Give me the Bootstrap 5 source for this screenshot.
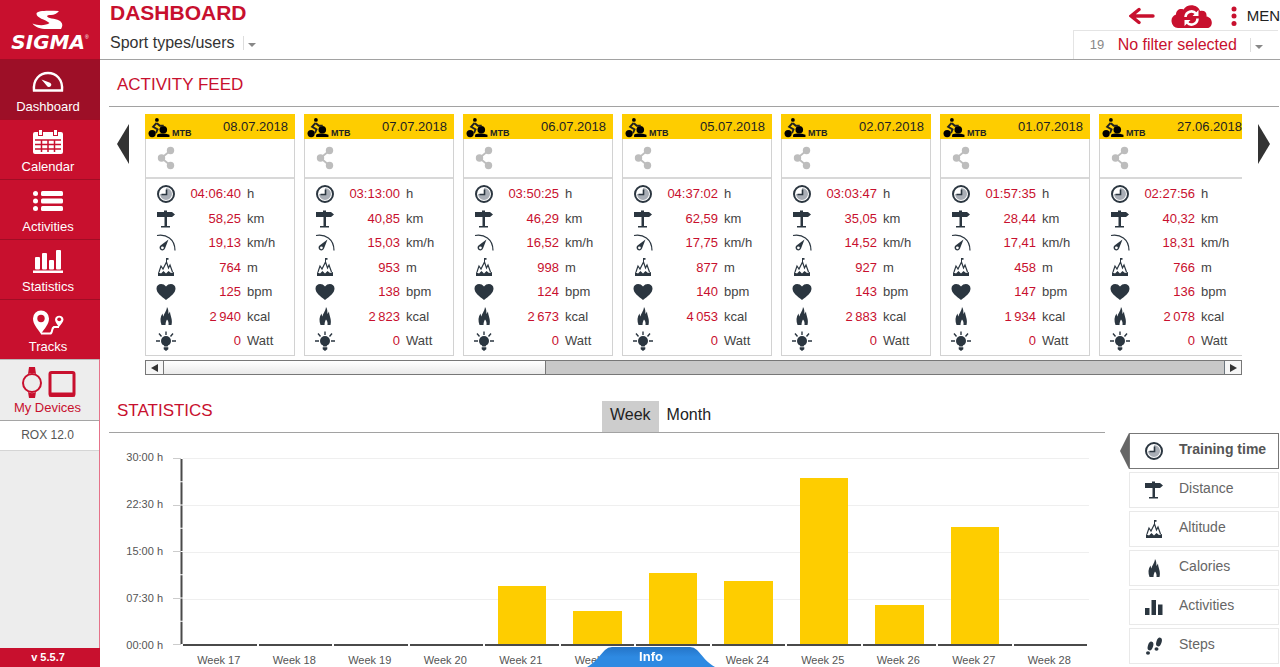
<!DOCTYPE html>
<html lang="en">
<head>
<meta charset="utf-8">
<meta name="viewport" content="width=device-width, initial-scale=1">
<title>Dashboard</title>
<link rel="stylesheet" href="https://cdn.jsdelivr.net/npm/bootstrap@5.3.0/dist/css/bootstrap.min.css">
<style>
:root{--sg-red:#c8102e;--sg-yellow:#fecd00;--sg-ink:#2b3640;--sg-line:#a2a2a2}
body{font-family:"Liberation Sans",Arial,sans-serif;color:#333;background:#fff;overflow-x:hidden}
button,select{font-family:inherit}
.side{width:100px;flex:none;background:#ededed}
.side-red{background:var(--sg-red);color:#fff}
.logo-box{height:59px;padding:10px 4px 0 0}
.wordmark{font:italic bold 20px/16px "DejaVu Sans",sans-serif}
.reg{font-size:5px;line-height:6px}
.nav-tile{height:60px;padding:10px 4px 0 0;border-top:1px solid #a00d25;color:#fff;font-size:13px;line-height:16px;gap:3px}
.nav-tile svg{width:32px;height:26px}
.nav-tile.on{background:#9d0f27}
.nav-tile:hover{color:#fff}
.side-low{border-right:1px solid #e5738a}
.devices{height:62px;padding:7px 4px 0 0;border-top:1px solid #b9b9b9;border-bottom:1px solid #a5a5a5;color:var(--sg-red);font-size:13px;line-height:16px;gap:1px}
.device-name{height:30px;padding:0 4px 2px 0;background:#fff;border-bottom:1px solid #d5d5d5;font-size:12px;color:#555}
.version{height:19px;padding-right:4px;font-size:11px;font-weight:bold}
.top{height:60px;border-bottom:1px solid var(--sg-line);padding-left:10px}
.top h1{font-size:21px;line-height:24px;font-weight:bold;color:var(--sg-red);margin:1px 0 8px}
.plain-select{appearance:none;border:0;background:none;padding:0;font-size:16px;line-height:20px;color:#333}
.split{width:1px;height:14px;background:#ddd}
.tri{border:4px solid transparent;border-top-color:#888;border-bottom:0}
.tools{height:30px;padding-left:56px;padding-top:2px}
.icon-btn{border:0;background:none;padding:0;display:flex}
.menu-word{font-size:15px;line-height:20px;color:#222}
.filter-box{height:29px;width:205px;border:1px solid #e4e4e4;border-width:1px 0 0 1px;padding-left:16px;overflow:hidden;color:var(--sg-red)}
.filter-box>*{flex:none}
.filter-box label{font-size:13px;color:#888;width:28px}
.filter-box select{color:var(--sg-red);width:124px}
.content{padding:0 1px 0 9px}
.sec-title{font-size:17px;line-height:20px;font-weight:normal;color:var(--sg-red);margin:0}
.feed-head{height:47px;padding:15px 0 0 8px;border-bottom:1px solid var(--sg-line)}
.feed{padding:7px 9px 0 8px;gap:16px}
.turn{margin-top:10px}
.act{width:150px;flex:none;border:1px solid #d2d2d2;height:242px;border-top:0}
.act-top{height:25px;background:var(--sg-yellow);margin:0 -1px;padding:0 7px 0 3px;font-size:13px;line-height:26px;color:#222}
.act-top b{font-size:9px;line-height:10px;margin:14px 0 0 2px}
.act-share{height:40px;border-bottom:2px solid #d8d8d8;padding:7px 0 0 10px}
.act-rows{height:176px;padding:3px 0 2px 10px}
.act-row{flex:1 1 0;color:#444;font-size:13px}
.act-row output{width:65px;color:var(--sg-red);text-align:right;margin-right:6px}
.act-list{gap:9px}
.hbar{height:15px;margin-top:4px;border:1px solid #777;background:#c8c8c8}
.hbar button{width:17px;border:0;background:#f6f6f6;padding:0}
.hbar-thumb{width:35%;background:linear-gradient(#fff,#eaeaea);border:solid #777;border-width:0 1px}
.stats{margin-top:26px;gap:24px}
.stats-head{display:grid;grid-template-columns:98fr 100fr;border-bottom:1px solid var(--sg-line)}
.stats-head .sec-title{padding-left:8px}
.tab-btn{border:0;background:none;font-size:16px;line-height:20px;padding:4px 8px 7px;color:#222}
.tab-btn.on{background:#cdcdcd}
.chart{padding:25px 16px 0 17px;font-size:11px;line-height:12px;color:#555}
.y-labels{width:37px;margin:-7px 10px -5px 0}
.plot{display:grid;height:188px}
.plot>div{grid-area:1/1}
.rule{flex:1 1 0;border-top:1px solid #efefef}
.slot{flex:1 1 0;border-bottom:2px solid #4a4a4a;margin-right:2px}
.bar-fill{width:66%;background:var(--sg-yellow)}
.x-labels{margin-left:57px;padding-top:8px}
.x-labels span{flex:1 1 0;text-align:center;padding-right:4px}
.picker{width:150px;flex:none;padding-top:32px;gap:3px}
.pick{height:36px;border:1px solid #e9e9e9;background:#fff;padding:0 0 0 14px;gap:15px;font-size:14px;color:#666;position:relative}
.pick span{padding-bottom:3px}
.pick.on{border-color:#777;font-weight:bold;color:#555}
.pick-mark{position:absolute;left:-10px;top:-1px}
.info-tab{position:fixed;bottom:0;left:50%;margin-left:-53px;border:0;padding:0;background:none;width:128px;height:20px}
.info-tab svg{position:absolute;inset:0}
.info-tab span{position:relative;color:#fff;font-weight:bold;font-size:13px;line-height:20px;display:block}
.ink{color:var(--sg-ink);fill:currentColor}
</style>
</head>
<body>
<svg class="d-none" aria-hidden="true">
  <symbol id="i-time" viewBox="0 0 20 20"><circle cx="10" cy="10" r="8" fill="#fff" stroke="currentColor" stroke-width="2"/><path d="M10 4a6 6 0 1 1-6 6h6z" fill="#a9aeb6"/><path d="M10.500 5.500v5H5.500" fill="none" stroke="currentColor" stroke-width="1.600"/></symbol>
  <symbol id="i-dist" viewBox="0 0 20 20"><path d="M1 3h7V1.500h3V3h5l3 2.500L16 8h-5v9h3v1.500H5V17h3.500V8H1z"/></symbol>
  <symbol id="i-speed" viewBox="0 0 20 20"><path d="M1 2.500c9-1.500 18 3 18 15" fill="none" stroke="currentColor" stroke-width="1.200"/><path d="M12.500 6.500 9 15.500A2.800 2.800 0 1 1 4.500 12.500z"/><circle cx="6.400" cy="14.800" r="1.400" fill="#fff"/></symbol>
  <symbol id="i-alt" viewBox="0 0 20 20"><path d="M3 15l2-6 2 3L10.500 5l2 6 1.500-3 2.500 7" fill="none" stroke="currentColor" stroke-width="1.200"/><path d="M10 6V1h2.500v1.700H11V6zM2 19v-4l3 1.500L7.500 14l2.500 2.500 2.500-2.500 2.500 2 3-1v4z"/></symbol>
  <symbol id="i-heart" viewBox="0 0 20 20"><path d="M10 18C5 14 .5 11 .5 6.500.5 1.500 7 .5 10 4.500c3-4 9.500-3 9.500 2C19.500 11 15 14 10 18z"/></symbol>
  <symbol id="i-fire" viewBox="0 0 20 20"><path d="M5.500 19C4 15 4 11 6.500 7.500c.3 1 .3 2 1 3C8 7 10.500 5.500 11 1c1.700 2 1.200 5 1.500 7L14 5.500c0 4 3 8 1.500 13.500h-3c.2-2 0-4-1.500-5.500-1 1.500-1.300 3-1.500 5.500z"/></symbol>
  <symbol id="i-watt" viewBox="0 0 20 20"><circle cx="10" cy="10" r="5"/><path d="M8 14h4l-.3 1.500H8.300zM7.700 16.200h4.600v2L10 20l-2.300-1.800z"/><path d="M0 10h4M16 10h4M3 2.500 5.500 5.500M17 2.500l-2.500 3M10 .5V4" stroke="currentColor" stroke-width="1.400"/></symbol>
  <symbol id="i-bars" viewBox="0 0 20 20"><path d="M1 11h4.500v7H1zM7.500 3H12v15H7.500zM14 7.500h4.500V18H14z"/></symbol>
  <symbol id="i-steps" viewBox="0 0 20 20"><ellipse cx="6.500" cy="10" rx="2.600" ry="4.500" transform="rotate(18 6.500 10)"/><ellipse cx="4" cy="17" rx="2" ry="1.700"/><ellipse cx="15" cy="6" rx="2.600" ry="4.500" transform="rotate(18 15 6)"/><ellipse cx="12.500" cy="13" rx="2" ry="1.800"/></symbol>
  <symbol id="i-share" viewBox="0 0 20 24"><path d="M14.500 4.500 5.500 12l9 7.500" fill="none" stroke="#bdbdbd" stroke-width="1.800"/><g fill="#bdbdbd"><circle cx="14.500" cy="4.500" r="3.700"/><circle cx="5.500" cy="12" r="3.700"/><circle cx="14.500" cy="19.500" r="3.700"/></g></symbol>
  <symbol id="i-mtb" viewBox="0 0 22 21"><circle cx="3.800" cy="16.300" r="3.800"/><circle cx="15.500" cy="12.300" r="4"/><circle cx="8.800" cy="2" r="2"/><path d="M9 17.500c3-1.500 8-1.500 13 0V20H9z"/><path d="m8.500 5-3.700 4.200L9.500 12l-1.700 4M8.800 5.500l3 2.700h4.200" fill="none" stroke="currentColor" stroke-width="2"/></symbol>
</svg>

<div class="d-flex min-vh-100">
  <nav class="side d-flex flex-column" aria-label="Main">
    <div class="side-red logo-box d-flex flex-column align-items-center">
      <svg width="32" height="20" viewBox="32 10 32 20" fill="#fff"><path d="M59 11C50 10.500 37 10 36.500 13.500c-.5 4.500 8.500 6 13 9.500-3 2.500-11 3-17 .5 3 4 8 5.500 14 5.500h14.500c4-7-2-9.500-9.500-10.500C46.500 17.500 45 15 51 15c3 0 6-1.500 8-4z"/></svg>
      <div class="d-flex mt-1 ps-1"><span class="wordmark">SIGMA</span><span class="reg">®</span></div>
    </div>
    <div class="side-red">
      <a href="#" class="nav-tile on d-flex flex-column align-items-center text-decoration-none"><svg viewBox="0 0 32 26"><path d="M2 20.500C1 9 8 3 16 3s15 6 14 17.500z" fill="none" stroke="#fff" stroke-width="2.400"/><path d="m9.500 9.500 8.500 3.200a2.300 2.300 0 1 1-3 3.200z" fill="#fff"/></svg>Dashboard</a>
      <a href="#" class="nav-tile d-flex flex-column align-items-center text-decoration-none"><svg viewBox="0 0 32 26"><path d="M1 4a2 2 0 0 1 2-2h3v4h5V2h10v4h5V2h3a2 2 0 0 1 2 2v18a2 2 0 0 1-2 2H3a2 2 0 0 1-2-2z" fill="#fff"/><path d="M7 0h3v5H7zM22 0h3v5h-3z" fill="#fff"/><path d="M3 10h26M3 14.500h26M3 19h26M9.500 10v12M16 10v12M22.500 10v12" stroke="#c8102e" stroke-width="1.500"/></svg>Calendar</a>
      <a href="#" class="nav-tile d-flex flex-column align-items-center text-decoration-none"><svg viewBox="0 0 32 26" fill="#fff"><circle cx="3.500" cy="3.500" r="2.500"/><circle cx="3.500" cy="11" r="2.500"/><circle cx="3.500" cy="18.500" r="2.500"/><rect x="9" y="1" width="22" height="5" rx="1.500"/><rect x="9" y="8.500" width="22" height="5" rx="1.500"/><rect x="9" y="16" width="22" height="5" rx="1.500"/></svg>Activities</a>
      <a href="#" class="nav-tile d-flex flex-column align-items-center text-decoration-none"><svg viewBox="0 0 32 26" fill="#fff"><rect x="3" y="7" width="5" height="12.500" rx="1"/><rect x="10" y="3" width="5" height="16.500" rx="1"/><rect x="17" y="10" width="5" height="9.500" rx="1"/><rect x="24" y="0" width="5" height="19.500" rx="1"/><path d="M1 20.500h30V23H1z"/></svg>Statistics</a>
      <a href="#" class="nav-tile d-flex flex-column align-items-center text-decoration-none"><svg viewBox="0 0 32 26"><path d="M9 24C5 18 1 14 1 8.500a8 8 0 0 1 16 0C17 14 13 18 9 24z" fill="#fff"/><circle cx="9" cy="8.500" r="3.700" fill="#c8102e"/><path d="M27 17c-2-3-4-5-4-7.500a4.300 4.300 0 0 1 8.500 0c0 2.500-2.500 4.500-4.500 7.500z" fill="#fff"/><circle cx="27.200" cy="9.300" r="1.900" fill="#c8102e"/><path d="M9 23.500h9c3 0 1-5 4-6.500h5" fill="none" stroke="#fff" stroke-width="2"/></svg>Tracks</a>
    </div>
    <div class="side-low flex-grow-1">
      <a href="#" class="devices d-flex flex-column align-items-center text-decoration-none"><svg width="56" height="32" viewBox="0 0 56 32" fill="none" stroke="#c8102e"><circle cx="12" cy="16" r="9" stroke-width="2"/><path d="M8 7 9 0h6l1 7c-3-1.500-5-1.500-8 0zM8 25l1 6h6l1-6c-3 1.500-5 1.500-8 0z" fill="#c8102e" stroke="none"/><rect x="30" y="5.500" width="24" height="23" rx="1.500" stroke-width="3"/><path d="M29 27.500h26" stroke-width="4"/></svg>My Devices</a>
      <div class="device-name d-flex align-items-center justify-content-center">ROX 12.0</div>
    </div>
    <div class="side-red version d-flex align-items-center justify-content-center">v 5.5.7</div>
  </nav>

  <main class="flex-grow-1 overflow-hidden">
    <header class="top d-flex justify-content-between">
      <div>
        <h1>DASHBOARD</h1>
        <div class="d-flex align-items-center">
          <select class="plain-select" aria-label="Sport types"><option>Sport types/users</option></select>
          <span class="split ms-2 me-1"></span><span class="tri mt-1"></span>
        </div>
      </div>
      <div>
        <div class="tools d-flex align-items-center">
          <button class="icon-btn" aria-label="Back"><svg width="26" height="20" viewBox="0 0 26 20" fill="none" stroke="#c8102e" stroke-width="3.400" stroke-linecap="round"><path d="M3 10h21M10 3.500 2 10l8 6.500"/></svg></button>
          <button class="icon-btn ms-3" aria-label="Synchronise"><svg width="42" height="26" viewBox="0 0 42 26"><path d="M7 25a7 7 0 0 1-2-13.500C5 7 9 5 12.500 6.500 16 0 27 1 29 8c5-1 7 2 6.500 5.500C43 15 42 25 36 25z" fill="#c8102e"/><path d="M14.500 14a6 6 0 0 1 10.500-3.500M26.500 15.500A6 6 0 0 1 16 19.500" fill="none" stroke="#fff" stroke-width="2.600"/><path d="M27.500 7v6h-6zM13.500 23v-6h6z" fill="#fff"/></svg></button>
          <button class="icon-btn ms-3 align-items-center" aria-label="Menu"><svg width="10" height="22" viewBox="0 0 10 22" fill="#c8102e"><circle cx="5" cy="4" r="2.500"/><circle cx="5" cy="11" r="2.500"/><circle cx="5" cy="18.500" r="2.500"/></svg><span class="menu-word ms-2">MEN</span></button>
        </div>
        <div class="filter-box d-flex align-items-center">
          <label for="flt">19</label>
          <select id="flt" class="plain-select"><option>No filter selected</option></select>
          <span class="split ms-2 me-1"></span><span class="tri mt-1"></span>
          <span class="ms-3">T</span>
        </div>
      </div>
    </header>

    <div class="content">
      <section>
        <div class="feed-head"><h2 class="sec-title">ACTIVITY FEED</h2></div>
        <div class="feed d-flex align-items-start">
          <button class="icon-btn turn" aria-label="Previous"><svg width="12" height="40"><path d="M12 0v40L0 20z" fill="#333"/></svg></button>
          <div class="flex-grow-1 overflow-hidden">
            <div class="act-list d-flex" id="feed"></div>
            <div class="hbar d-flex">
              <button class="d-flex align-items-center justify-content-center" aria-label="Scroll left"><svg width="7" height="8"><path d="M7 0v8L0 4z" fill="#333"/></svg></button>
              <div class="hbar-thumb"></div>
              <button class="ms-auto border-start border-secondary d-flex align-items-center justify-content-center" aria-label="Scroll right"><svg width="7" height="8"><path d="M0 0v8l7-4z" fill="#333"/></svg></button>
            </div>
          </div>
          <button class="icon-btn turn" aria-label="Next"><svg width="12" height="40"><path d="M0 0v40l12-20z" fill="#333"/></svg></button>
        </div>
      </section>

      <section class="stats d-flex">
        <div class="flex-grow-1">
          <div class="stats-head">
            <h2 class="sec-title">STATISTICS</h2>
            <div class="d-flex"><button class="tab-btn on">Week</button><button class="tab-btn">Month</button></div>
          </div>
          <div class="chart">
            <div class="d-flex">
              <div class="y-labels d-flex flex-column justify-content-between text-end text-nowrap"><span>30:00 h</span><span>22:30 h</span><span>15:00 h</span><span>07:30 h</span><span>00:00 h</span></div>
              <svg width="10" height="188"><path d="M8.500 1v186" stroke="#4a4a4a" stroke-width="2" stroke-dasharray="22.250 1"/><path d="M0 .5h8M0 47.500h8M0 93.500h8M0 140.500h8M0 186.500h8" stroke="#ccc"/></svg>
              <div class="plot flex-grow-1">
                <div class="d-flex flex-column"><div class="rule"></div><div class="rule"></div><div class="rule"></div><div class="rule"></div></div>
                <div class="d-flex" id="bars"></div>
              </div>
            </div>
            <div class="x-labels d-flex" id="weeks"></div>
          </div>
        </div>
        <div class="picker d-flex flex-column" id="picker"></div>
      </section>
    </div>
  </main>
</div>

<button class="info-tab"><svg width="128" height="20"><defs><linearGradient id="ig" x2="0" y2="1"><stop stop-color="#2474c8"/><stop offset=".5" stop-color="#2e8ae2"/></linearGradient></defs><path d="M0 20C8 16 13 8 18 3q3-3 7-3h78q4 0 7 3c5 5 10 13 18 17z" fill="url(#ig)"/></svg><span>Info</span></button>

<script>
const icon = (id, h = 20) => `<svg class="ink flex-shrink-0" width="20" height="${h}" aria-hidden="true"><use href="#i-${id}"/></svg>`;
const metrics = [['time','h'],['dist','km'],['speed','km/h'],['alt','m'],['heart','bpm'],['fire','kcal'],['watt','Watt']];
const rides = [
  ['08.07.2018','04:06:40','58,25','19,13','764','125','2\u2009940','0'],
  ['07.07.2018','03:13:00','40,85','15,03','953','138','2\u2009823','0'],
  ['06.07.2018','03:50:25','46,29','16,52','998','124','2\u2009673','0'],
  ['05.07.2018','04:37:02','62,59','17,75','877','140','4\u2009053','0'],
  ['02.07.2018','03:03:47','35,05','14,52','927','143','2\u2009883','0'],
  ['01.07.2018','01:57:35','28,44','17,41','458','147','1\u2009934','0'],
  ['27.06.2018','02:27:56','40,32','18,31','766','136','2\u2009078','0']];
document.getElementById('feed').innerHTML = rides.map(([date, ...vals]) => `
  <article class="act">
    <div class="act-top d-flex"><svg class="mt-1" width="22" height="20"><use href="#i-mtb"/></svg><b>MTB</b><span class="ms-auto">${date}</span></div>
    <div class="act-share"><button class="icon-btn" aria-label="Share">${icon('share', 24)}</button></div>
    <div class="act-rows d-flex flex-column">${metrics.map(([id, unit], i) =>
      `<div class="act-row d-flex align-items-center">${icon(id)}<output>${vals[i]}</output><span>${unit}</span></div>`).join('')}</div>
  </article>`).join('');

/* bar heights in percent of 30 hours, week 17 onwards */
const weeks = [0, 0, 0, 0, 31, 18, 38, 34, 89, 21, 63, 0];
/* the Info tab lies over this week's label */
const coveredWeek = 23;
document.getElementById('bars').innerHTML = weeks.map(v =>
  `<div class="slot d-flex align-items-end justify-content-center"><div class="bar-fill" style="height:${v}%"></div></div>`).join('');
document.getElementById('weeks').innerHTML = weeks.map((v, i) => `<span>${17 + i === coveredWeek ? '' : 'Week ' + (17 + i)}</span>`).join('');

const picks = [['time','Training time'],['dist','Distance'],['alt','Altitude'],['fire','Calories'],['bars','Activities'],['steps','Steps']];
document.getElementById('picker').innerHTML = picks.map(([id, name], i) =>
  `<button class="pick d-flex align-items-center text-nowrap${i ? '' : ' on'}">${i ? '' : '<svg class="pick-mark" width="9" height="36"><path d="M9 0v36L0 18z" fill="#666"/></svg>'}${icon(id)}<span>${name}</span></button>`).join('');
</script>
<script src="https://cdn.jsdelivr.net/npm/bootstrap@5.3.0/dist/js/bootstrap.bundle.min.js"></script>
</body>
</html>
